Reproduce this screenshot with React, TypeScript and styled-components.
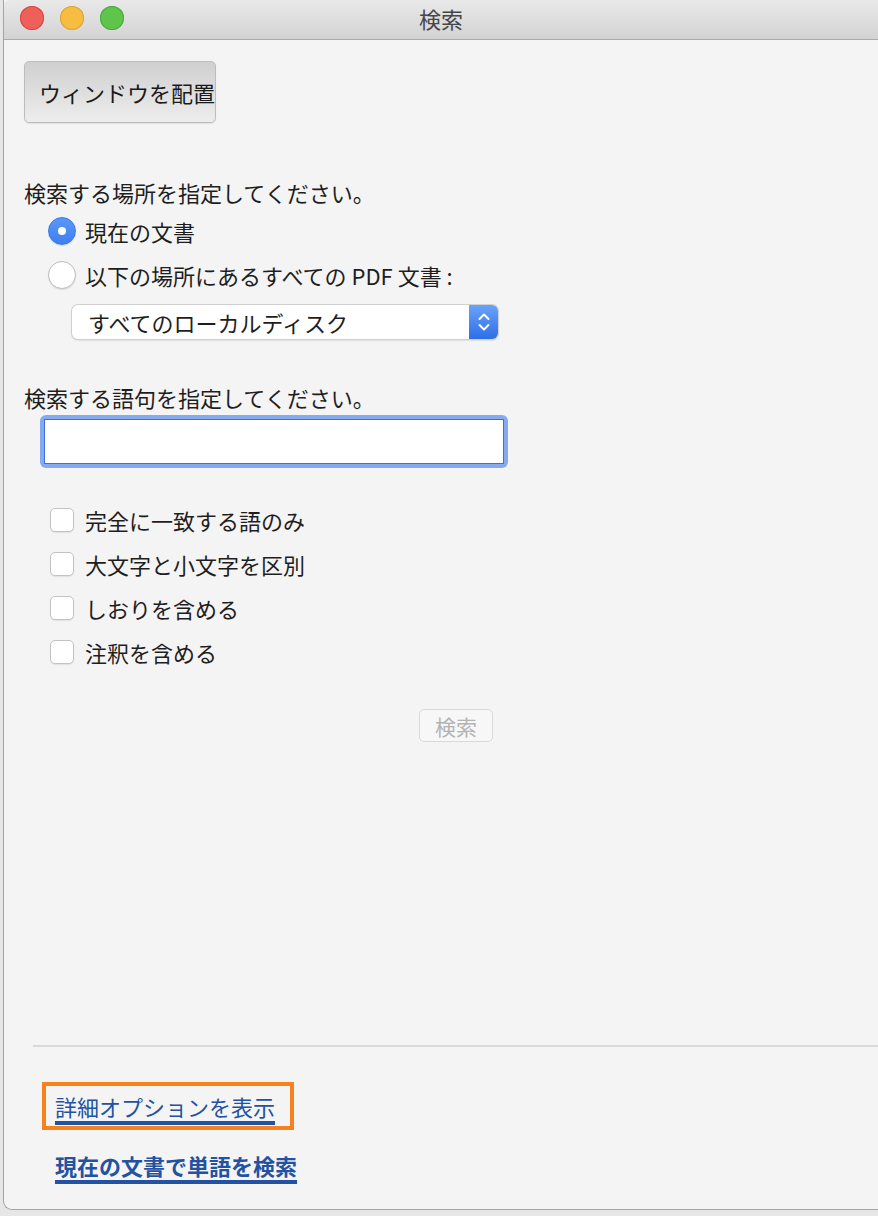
import styled, { createGlobalStyle } from "styled-components";

const GlobalStyle = createGlobalStyle`
    html, body {
        margin: 0;
        padding: 0;
        background: #e6e6e6;
    }
    body {
        font-family: "Noto Sans CJK JP", "Noto Sans", sans-serif;
        color: #1e1e1e;
    }
`;

// ウィンドウ本体
const Window = styled.div`
    margin-left: 3px;
    height: 1210px;
    box-sizing: border-box;
    background: #f4f4f4;
    border-left: 1px solid #a4a4a4;
    border-bottom: 1px solid #a4a4a4;
    border-bottom-left-radius: 9px;
    display: flex;
    flex-direction: column;
    overflow: hidden;
`;

const TitleBar = styled.div`
    height: 40px;
    box-sizing: border-box;
    display: grid;
    grid-template-columns: 1fr auto 1fr;
    align-items: center;
    background: linear-gradient(#e9e9e9, #d3d3d3);
    border-bottom: 1px solid #aaaaaa;
    border-top-left-radius: 6px;
`;

const Lights = styled.div`
    display: flex;
    gap: 16px;
    padding-left: 16px;
    padding-bottom: 4px;
`;

const Light = styled.span<{ $color: string; $edge: string }>`
    width: 24px;
    height: 24px;
    border-radius: 50%;
    background: ${(p) => p.$color};
    box-shadow: inset 0 0 0 1px ${(p) => p.$edge};
`;

const Title = styled.div`
    font-size: 22px;
    color: #474747;
    padding-bottom: 3px;
`;

const Content = styled.div`
    padding-left: 20px;
    display: flex;
    flex-direction: column;
    align-items: flex-start;
`;

const ArrangeButton = styled.button`
    margin-top: 21px;
    width: 192px;
    height: 62px;
    box-sizing: border-box;
    padding: 0 0 0 14px;
    text-align: left;
    font-family: inherit;
    font-size: 22px;
    color: #1a1a1a;
    background: linear-gradient(#cfcfcf, #ededed);
    border: 1px solid #bcbcbc;
    border-radius: 5px;
    box-shadow: 0 1px 1px rgba(0, 0, 0, 0.08);
`;

const Label = styled.div<{ $top: number }>`
    margin-top: ${(p) => p.$top}px;
    height: 28px;
    line-height: 28px;
    font-size: 22px;
`;

const OptionRow = styled.label<{ $indent: number; $gap: number }>`
    display: flex;
    align-items: center;
    height: 44px;
    margin-left: ${(p) => p.$indent}px;
    gap: ${(p) => p.$gap}px;
    font-size: 22px;
`;

const Group = styled.div<{ $top: number }>`
    margin-top: ${(p) => p.$top}px;
    display: flex;
    flex-direction: column;
`;

const Radio = styled.span<{ $on?: boolean }>`
    width: 28px;
    height: 28px;
    box-sizing: border-box;
    border-radius: 50%;
    display: flex;
    align-items: center;
    justify-content: center;
    background: ${(p) => (p.$on ? "linear-gradient(#5a98f6, #3f7ff0)" : "#fff")};
    border: 1px solid ${(p) => (p.$on ? "#3a78e6" : "#bdbdbd")};
    box-shadow: 0 1px 1px rgba(0, 0, 0, 0.1);

    &::after {
        content: "";
        display: ${(p) => (p.$on ? "block" : "none")};
        width: 8px;
        height: 8px;
        border-radius: 50%;
        background: #fff;
    }
`;

const Checkbox = styled.span`
    width: 24px;
    height: 24px;
    box-sizing: border-box;
    border-radius: 5px;
    background: #fff;
    border: 1px solid #c2c2c2;
    box-shadow: 0 1px 1px rgba(0, 0, 0, 0.08);
`;

const Select = styled.div`
    margin-top: 8px;
    margin-left: 48px;
    width: 426px;
    height: 34px;
    box-sizing: border-box;
    display: flex;
    background: #fff;
    border-radius: 6px;
    box-shadow: 0 0 0 1px #d0d0d0, 0 1px 2px rgba(0, 0, 0, 0.25);
    overflow: hidden;
`;

const SelectText = styled.div`
    flex: 1;
    padding-left: 16px;
    line-height: 34px;
    font-size: 22px;
`;

const SelectArrows = styled.div`
    width: 29px;
    display: flex;
    align-items: center;
    justify-content: center;
    background: linear-gradient(#6aa3fa, #2f6ee8);
`;

const FocusRing = styled.div`
    margin-top: 4px;
    margin-left: 16px;
    width: 468px;
    height: 53px;
    box-sizing: border-box;
    padding: 4px;
    border-radius: 6px;
    background: #86aaf0;
`;

const TextBox = styled.input`
    display: block;
    width: 100%;
    height: 100%;
    box-sizing: border-box;
    margin: 0;
    border: 1.5px solid #3d6fd8;
    background: #fff;
    outline: none;
`;

const SearchButton = styled.button`
    margin-top: 35px;
    margin-left: 395px;
    width: 74px;
    height: 33px;
    box-sizing: border-box;
    font-family: inherit;
    font-size: 21px;
    color: #b3b3b3;
    background: #f7f7f7;
    border: 1px solid #d9d9d9;
    border-radius: 5px;
    padding: 0;
`;

const Divider = styled.hr`
    margin: 303px 0 0 9px;
    width: 900px;
    height: 2px;
    border: 0;
    background: #d9d9d9;
`;

const Highlight = styled.div`
    margin-top: 35px;
    margin-left: 18px;
    height: 48px;
    box-sizing: border-box;
    padding: 0 15px 0 9px;
    border: 4px solid #f5821f;
    display: flex;
    align-items: center;
`;

const Link = styled.a<{ $bold?: boolean }>`
    font-size: 22px;
    line-height: 28px;
    color: #2352a2;
    font-weight: ${(p) => (p.$bold ? 700 : 400)};
    text-decoration: underline;
    text-decoration-thickness: 4px;
    text-underline-offset: 5px;
    cursor: pointer;
`;

const BottomLink = styled.div`
    margin-top: 21px;
    margin-left: 31px;
`;

const ArrowsIcon = () => (
    <svg width="14" height="22" viewBox="0 0 14 22">
        <path d="M2.5 8 L7 3.5 L11.5 8" fill="none" stroke="#fff" strokeWidth="2" strokeLinecap="round" strokeLinejoin="round" />
        <path d="M2.5 14 L7 18.5 L11.5 14" fill="none" stroke="#fff" strokeWidth="2" strokeLinecap="round" strokeLinejoin="round" />
    </svg>
);

const options = ["完全に一致する語のみ", "大文字と小文字を区別", "しおりを含める", "注釈を含める"];

const App = () => {
    return (
        <>
            <GlobalStyle />
            <Window>
                <TitleBar>
                    <Lights>
                        <Light $color="#f0605a" $edge="#d8453f" />
                        <Light $color="#f7bd40" $edge="#dba234" />
                        <Light $color="#5ec54a" $edge="#47a93a" />
                    </Lights>
                    <Title>検索</Title>
                    <div />
                </TitleBar>
                <Content>
                    <ArrangeButton>ウィンドウを配置</ArrangeButton>

                    <Label $top={55}>検索する場所を指定してください。</Label>
                    <Group $top={3}>
                        <OptionRow $indent={24} $gap={9}>
                            <Radio $on />
                            現在の文書
                        </OptionRow>
                        <OptionRow $indent={24} $gap={9}>
                            <Radio />
                            以下の場所にあるすべての PDF 文書 :
                        </OptionRow>
                    </Group>
                    <Select>
                        <SelectText>すべてのローカルディスク</SelectText>
                        <SelectArrows>
                            <ArrowsIcon />
                        </SelectArrows>
                    </Select>

                    <Label $top={44}>検索する語句を指定してください。</Label>
                    <FocusRing>
                        <TextBox />
                    </FocusRing>

                    <Group $top={30}>
                        {options.map((o) => (
                            <OptionRow key={o} $indent={26} $gap={11}>
                                <Checkbox />
                                {o}
                            </OptionRow>
                        ))}
                    </Group>

                    <SearchButton disabled>検索</SearchButton>

                    <Divider />

                    <Highlight>
                        <Link>詳細オプションを表示</Link>
                    </Highlight>
                    <BottomLink>
                        <Link $bold>現在の文書で単語を検索</Link>
                    </BottomLink>
                </Content>
            </Window>
        </>
    );
};

export default App;
